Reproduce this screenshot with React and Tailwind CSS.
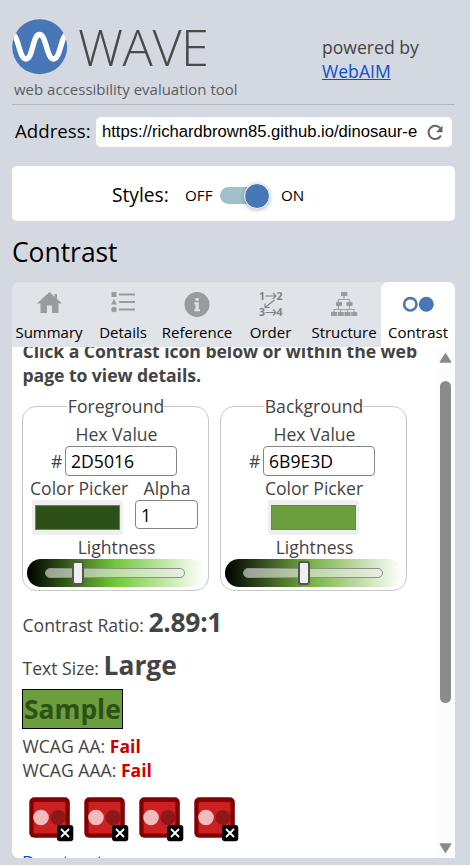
import React from "react";

const TABS = [
  { name: "Summary", width: "w-[74px]" },
  { name: "Details", width: "w-[74px]" },
  { name: "Reference", width: "w-[74px]" },
  { name: "Order", width: "w-[73px]" },
  { name: "Structure", width: "w-[74px]" },
  { name: "Contrast", width: "w-[74px]" },
];

function TabIcon({ name }) {
  if (name === "Summary")
    return (
      <svg width="40" height="32" viewBox="0 0 40 32" fill="#999c9f">
        <path d="M20.500 4 8 15.500H11.500V25h6.500v-7.500h5V25H29.500v-9.500H33L28 11V6H25.500v2.700z" />
      </svg>
    );
  if (name === "Details")
    return (
      <svg width="40" height="32" viewBox="0 0 40 32" fill="#999c9f">
        <path d="M8.500 4h5v5h-5zM16 5.500h16v2H16zM11 11l3 5.500H8zM16 13h16v2H16zM16 20.500h16v2H16z" />
        <circle cx="11" cy="21.500" r="2.700" />
      </svg>
    );
  if (name === "Reference")
    return (
      <svg width="40" height="32" viewBox="0 0 40 32">
        <circle cx="20" cy="16.500" r="12.500" fill="#999c9f" />
        <path d="M18.500 10h3.200v2.700h-3.200zM17.300 14.300h4.400v7h1.300v1.900h-5.700v-1.900h1.200v-5.100h-1.200z" fill="#e0e3e7" />
      </svg>
    );
  if (name === "Order")
    return (
      <svg width="40" height="32" viewBox="0 0 40 32">
        <g fill="#808386" fontFamily="Open Sans, sans-serif" fontWeight="700" fontSize="10.500">
          <text x="8" y="11.500">1</text>
          <text x="25.500" y="11.500">2</text>
          <text x="8" y="28">3</text>
          <text x="25.500" y="28">4</text>
        </g>
        <path d="M14.500 8H25M22 5l3 3-3 3M14.500 24.500H25m-3-3 3 3-3 3M23.500 12 14 19.500M14 15.500v4h4.500" fill="none" stroke="#808386" strokeWidth="1.100" />
      </svg>
    );
  if (name === "Structure")
    return (
      <svg width="40" height="32" viewBox="0 0 40 32">
        <path d="M20 8v3.500M14.500 15v-3.500h11V15M14.500 17v4.500M25.500 17v4.500M10 25v-3.500h20V25M16.500 25v-3.500M23.500 25v-3.500" fill="none" stroke="#a3a6a9" strokeWidth="1.200" />
        <path d="M17 4h6.300v4H17zM12 14h6v4h-6zM22.500 14h6v4h-6zM7 24h6v4H7zM13.800 24h6v4h-6zM20.500 24h6v4h-6zM27.200 24h6v4h-6z" fill="#999c9f" />
      </svg>
    );
  return (
    <svg width="40" height="32" viewBox="0 0 40 32">
      <circle cx="12.300" cy="16.300" r="6.200" fill="#fff" stroke="#4877b7" strokeWidth="2.600" />
      <circle cx="28.300" cy="16.300" r="7.500" fill="#4877b7" />
    </svg>
  );
}

function Lightness({ gradient, thumb }) {
  return (
    <div className={`ml-1 mr-1 flex h-7 items-center rounded-[14px] ${gradient}`}>
      <div className="relative ml-[18px] h-[10px] w-[140px] rounded-full border border-[#8d908b] bg-[#efefef]/60">
        <div className={`absolute -top-[8px] h-6 w-3 rounded-[3px] border-2 border-[#555] bg-[#efefef] ${thumb}`} />
      </div>
    </div>
  );
}

function Picker({ color }) {
  return (
    <div className="h-[35px] w-[91px] rounded-[3px] bg-[#efefef] px-[3px] py-[5px]">
      <div className={`h-[25px] border border-[#777] ${color}`} />
    </div>
  );
}

function ColorFieldset({ title, hex, children, gradient, thumb }) {
  return (
    <fieldset className="h-[197px] w-[187px] rounded-[14px] border border-[#c8c8c8]">
      <legend className="mx-auto h-6 pl-px leading-[25px]">{title}</legend>
      <div className="mt-1 pl-[2px] text-center">Hex Value</div>
      <div className="flex h-[30px] items-center pl-7">
        <span className="w-[14px]">#</span>
        <span className="flex h-[30px] w-[112px] items-center rounded-[4px] border border-[#858585] bg-white pl-[5px] text-black">
          {hex}
        </span>
      </div>
      {children}
      <div className="pl-[2px] text-center">Lightness</div>
      <Lightness gradient={gradient} thumb={thumb} />
    </fieldset>
  );
}

function ContrastError() {
  return (
    <svg width="45" height="45" viewBox="0 0 45 45">
      <rect x="0.300" y="0.300" width="40.500" height="40.500" rx="5" fill="#820000" />
      <rect x="4.500" y="5" width="32" height="31.500" rx="1" fill="#cc2022" />
      <circle cx="12" cy="20.500" r="7.800" fill="#f0bcbd" />
      <circle cx="29" cy="20.500" r="7.600" fill="#8e1719" />
      <rect x="28" y="28" width="16.300" height="16.300" rx="3" fill="#000" />
      <path d="m32 32 8 8m0-8-8 8" stroke="#fff" strokeWidth="1.800" />
    </svg>
  );
}

export default function App() {
  return (
    <div className="h-[865px] w-[470px] overflow-hidden bg-[#d4d9e1] pl-3 pr-[15px] font-['Open_Sans',sans-serif] text-[17.6px] leading-6 text-[#444]">
      <header className="flex h-[105px] border-b border-[#b2b7b8]">
        <div className="w-[310px] pt-[18px]">
          <div className="flex h-[62px]">
            <svg className="mt-px" width="56" height="56" viewBox="0 0 56 56">
              <defs>
                <clipPath id="disc">
                  <circle cx="27.700" cy="27.700" r="27.500" />
                </clipPath>
              </defs>
              <circle cx="27.700" cy="27.700" r="27.500" fill="#4877b7" />
              <path
                clipPath="url(#disc)"
                d="M0 14.500C7 17 7 40 14 40S20.500 15.500 27.500 15.500 34.500 40 41.500 40 48.500 17 55.500 14.500"
                fill="none"
                stroke="#fff"
                strokeWidth="5.400"
              />
            </svg>
            <span className="ml-[10px] text-[50.500px] font-light leading-[58px] tracking-[-0.5px] text-[#4a4a4a]">WAVE</span>
          </div>
          <div className="pl-[2px] text-[15px] leading-[18px] text-[#5a5c5f]">web accessibility evaluation tool</div>
        </div>
        <div className="pt-[35px]">
          powered by
          <br />
          <a className="text-[#0b50cc] underline">WebAIM</a>
        </div>
      </header>

      <div className="mt-3 flex h-[30px] items-center px-[3px]">
        <span className="w-[81px] pb-[3px] text-[18.700px] leading-7 text-black">Address:</span>
        <div className="flex h-[30px] flex-1 items-center rounded-[5px] bg-white pl-[6px] text-black">
          <span className="w-[316px] overflow-hidden whitespace-nowrap font-['Liberation_Sans',sans-serif] text-[16.640px]">
            https://richardbrown85.github.io/dinosaur-e
          </span>
          <svg className="ml-[8px] mt-px" width="18" height="18" viewBox="0 0 18 18">
            <path d="M14.500 4.500A6.600 6.600 0 1 0 15 11.500" fill="none" stroke="#676767" strokeWidth="2" />
            <path d="M16.500 1.500v6.800H10z" fill="#676767" />
          </svg>
        </div>
      </div>

      <div className="mt-[19px] flex h-[55px] items-center rounded-[5px] bg-white pb-px pl-[100px] pt-1 text-black">
        <span className="w-[73px] text-[19.200px]">Styles:</span>
        <span className="w-[35px] pb-px text-[15.200px]">OFF</span>
        <div className="relative h-[17px] w-[49px] rounded-full bg-[#a0c1ca]">
          <div className="absolute -top-1 right-[-1px] h-[26px] w-[26px] rounded-full border border-white bg-[#4877b7] shadow-[0_1px_4px_rgba(0,0,0,0.3)]" />
        </div>
        <span className="ml-3 pb-px text-[15.200px]">ON</span>
      </div>

      <h1 className="mt-[13px] h-12 text-[26.400px] leading-9 text-black">Contrast</h1>

      <nav className="flex h-[65px] rounded-t-[7px] bg-[#e0e3e7]">
        {TABS.map((tab) => (
          <div
            key={tab.name}
            className={`flex flex-col items-center whitespace-nowrap pt-[6px] text-[15px] leading-6 text-black ${tab.width} ${
              tab.name === "Contrast" ? "rounded-t-[7px] bg-white" : ""
            }`}
          >
            <div className="h-8">
              <TabIcon name={tab.name} />
            </div>
            <span>{tab.name}</span>
          </div>
        ))}
      </nav>

      <main className="flex h-[511px] overflow-hidden rounded-bl-[7px] bg-white">
        <div className="w-[424px] shrink-0 pl-[10px]">
          <p className="-mt-2 pl-[0.5px] font-bold tracking-[-0.05px]">
            Click a Contrast icon below or within the web
            <br />
            page to view details.
          </p>
          <div className="mt-[7px] flex gap-[11px]">
            <ColorFieldset
              title="Foreground"
              hex="2D5016"
              gradient="bg-[linear-gradient(to_right,#000,#72c938_50%,#fff)]"
              thumb="left-[26px]"
            >
              <div className="flex h-[59px] gap-3 pl-[9px]">
                <div>
                  <div className="-ml-[2px] w-[98px] whitespace-nowrap">Color Picker</div>
                  <Picker color="bg-[#2d5016]" />
                </div>
                <div className="-ml-[5px] w-[63px] text-center">
                  <div className="pl-px">Alpha</div>
                  <div className="flex h-[29px] items-center rounded-[4px] border border-[#858585] bg-white pl-[5px] text-black">
                    1
                  </div>
                </div>
              </div>
            </ColorFieldset>
            <ColorFieldset
              title="Background"
              hex="6B9E3D"
              gradient="bg-[linear-gradient(to_right,#000,#7ab546_50%,#fff)]"
              thumb="left-[54px]"
            >
              <div className="flex h-[59px] flex-col items-center">
                <div className="pl-px">Color Picker</div>
                <div className="pr-px">
                  <Picker color="bg-[#6b9e3d]" />
                </div>
              </div>
            </ColorFieldset>
          </div>
          <p className="mt-[11px] h-10 pl-[0.5px] leading-10">
            Contrast Ratio: <b className="text-[26.400px] tracking-[-0.3px]">2.89:1</b>
          </p>
          <p className="mt-[3px] h-10 pl-[0.5px] leading-10">
            Text Size: <b className="text-[26.400px]">Large</b>
          </p>
          <div className="mt-1 h-10 w-[101px] border border-black bg-[#6b9e3d] pl-px text-[26.400px] font-bold leading-[38px] text-[#2d5016]">
            Sample
          </div>
          <p className="mt-[5px] pl-[0.5px]">
            WCAG AA: <b className="text-[#c00]">Fail</b>
            <br />
            WCAG AAA: <b className="text-[#c00]">Fail</b>
          </p>
          <div className="mt-[15px] flex gap-[10px] pl-[7px]">
            <ContrastError />
            <ContrastError />
            <ContrastError />
            <ContrastError />
          </div>
          <a className="mt-[8px] block text-[#0b50cc] underline">Desaturate page</a>
        </div>
        <div className="flex w-[19px] flex-col items-center bg-[#fcfcfc]">
          <svg className="mt-[6px] shrink-0" width="13" height="10" viewBox="0 0 13 10">
            <path d="M6.500 1 11.500 9h-10z" fill="#8b8b8b" stroke="#8b8b8b" strokeWidth="1.500" strokeLinejoin="round" />
          </svg>
          <div className="mt-[18px] h-[322px] w-[11px] shrink-0 rounded-full bg-[#8b8b8b]" />
          <svg className="mt-[140px] shrink-0" width="13" height="10" viewBox="0 0 13 10">
            <path d="M6.500 9 11.500 1h-10z" fill="#8b8b8b" stroke="#8b8b8b" strokeWidth="1.500" strokeLinejoin="round" />
          </svg>
        </div>
      </main>
    </div>
  );
}
